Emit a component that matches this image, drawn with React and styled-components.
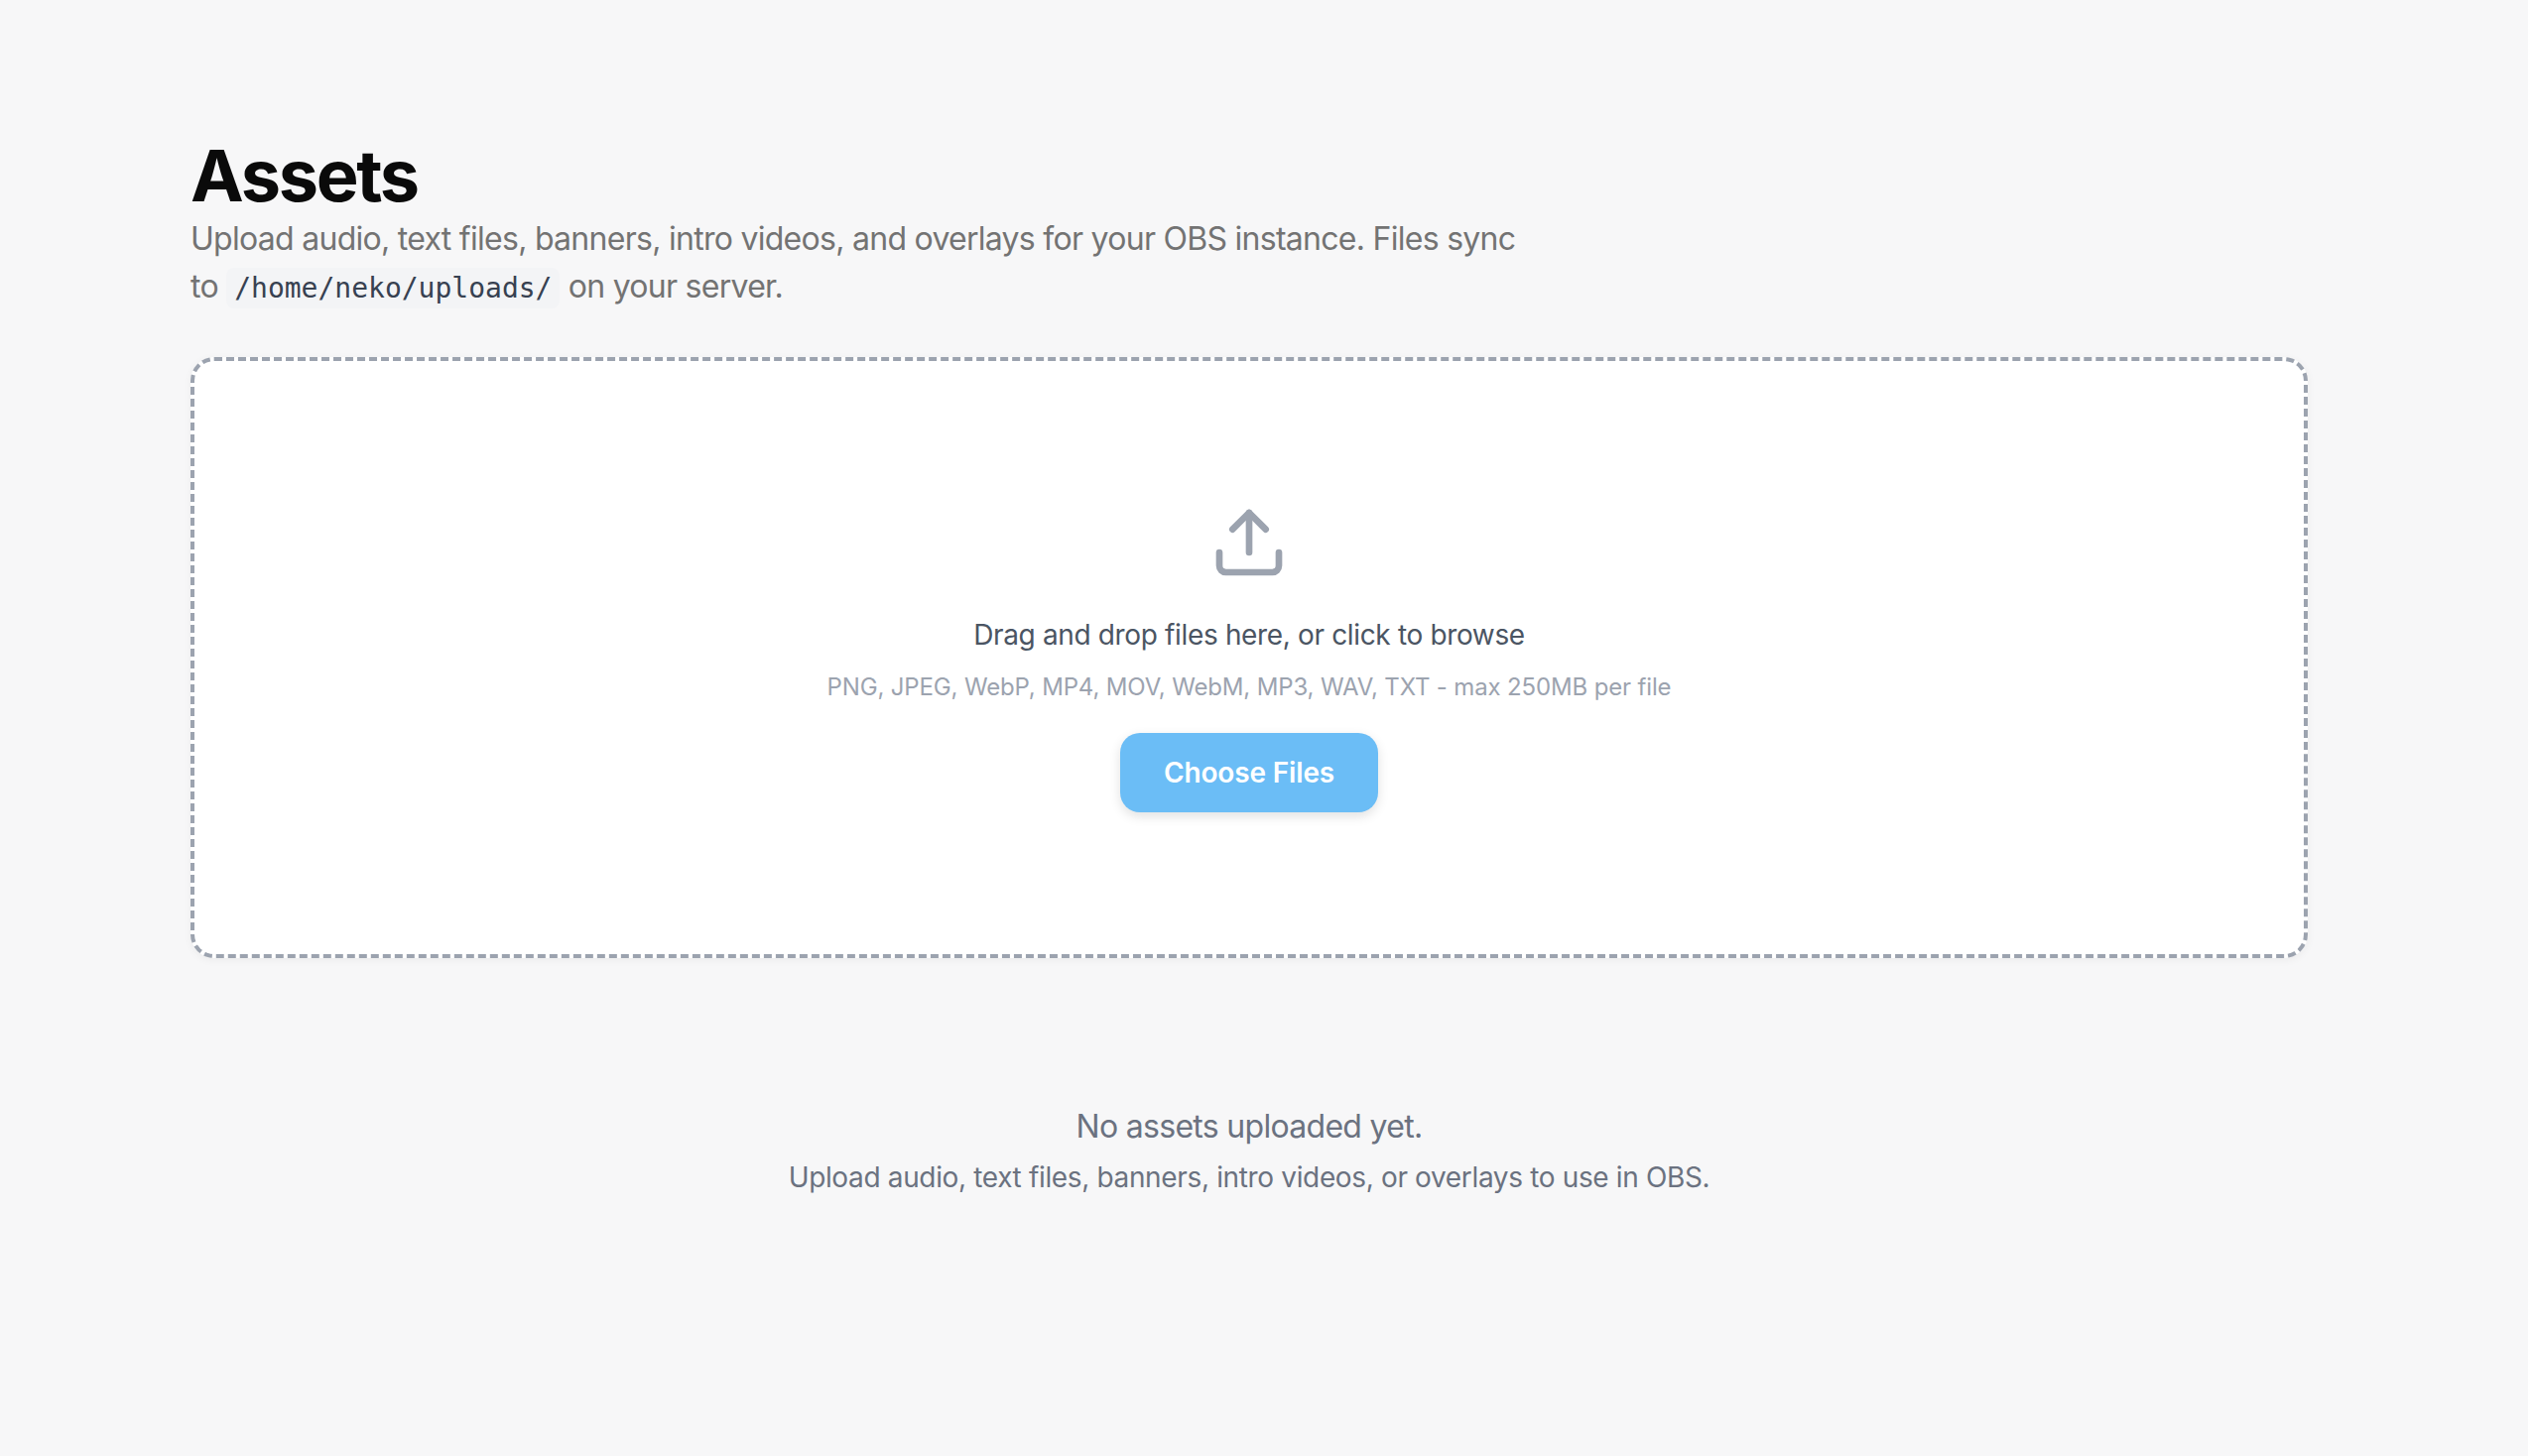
import React from "react";
import styled, { createGlobalStyle } from "styled-components";

const Global = createGlobalStyle`
  html, body { margin: 0; padding: 0; background: #f7f7f8; }
  body { font-family: Inter, "Liberation Sans", sans-serif; min-height: 1468px; }
`;
const Page = styled.main`
  box-sizing: border-box;
  width: 2134px;
  margin-left: 192px;
  padding-top: 137px;
`;
const Title = styled.h1`
  margin: 0;
  font-size: 72px;
  line-height: 80px;
  font-weight: 700;
  letter-spacing: -2.3px;
  color: #0a0a0a;
`;
const Lead = styled.p`
  margin: 0 0 47px;
  width: 1344px;
  font-size: 32px;
  line-height: 48px;
  letter-spacing: -0.72px;
  color: #737373;
`;
const Code = styled.code`
  padding: 4px 8px;
  border-radius: 8px;
  background: #f3f4f6;
  color: #374151;
  font-family: "DejaVu Sans Mono", monospace;
  font-size: 28px;
  line-height: 1;
  letter-spacing: 0;
`;
const Drop = styled.section`
  box-sizing: border-box;
  height: 606px;
  background: #fff;
  border: 4px dashed #9ca3af;
  border-radius: 24px;
  box-shadow: 0 2px 8px rgba(0, 0, 0, 0.05);
  display: flex;
  flex-direction: column;
  align-items: center;
  padding-top: 143px;
`;
const DropText = styled.p`
  margin: 32px 0 0;
  font-size: 28px;
  line-height: 42px;
  letter-spacing: -0.35px;
  color: #4b5563;
`;
const DropHint = styled.p`
  margin: 14px 0 0;
  font-size: 24px;
  line-height: 36px;
  letter-spacing: -0.15px;
  color: #9ca3af;
`;
const Button = styled.button`
  margin-top: 28px;
  width: 260px;
  height: 80px;
  border: 0;
  border-radius: 20px;
  background: #6bbdf6;
  color: #fff;
  font: 600 28px/40px Inter, sans-serif;
  letter-spacing: -0.15px;
  box-shadow: 0 4px 12px rgba(0,0,0,0.12);
`;
const Empty = styled.div`
  margin-top: 146px;
  display: flex;
  flex-direction: column;
  align-items: center;
`;
const EmptyTitle = styled.p`
  margin: 0;
  font-size: 32px;
  line-height: 48px;
  letter-spacing: -0.7px;
  color: #6b7280;
`;
const EmptyText = styled.p`
  margin: 6px 0 0;
  font-size: 28px;
  line-height: 42px;
  letter-spacing: -0.35px;
  color: #6b7280;
`;

export default function App() {
  return (
    <>
      <Global />
      <Page>
        <Title>Assets</Title>
        <Lead>
          Upload audio, text files, banners, intro videos, and overlays for your OBS instance. Files sync to <Code>/home/neko/uploads/</Code> on your server.
        </Lead>
        <Drop>
          <svg width="80" height="80" viewBox="0 0 24 24" fill="none" stroke="#9ca3af" strokeWidth="2" strokeLinecap="round" strokeLinejoin="round">
            <path d="M21 15v4a2 2 0 0 1-2 2H5a2 2 0 0 1-2-2v-4" />
            <path d="M17 8l-5-5-5 5" />
            <path d="M12 3v12" />
          </svg>
          <DropText>Drag and drop files here, or click to browse</DropText>
          <DropHint>PNG, JPEG, WebP, MP4, MOV, WebM, MP3, WAV, TXT - max 250MB per file</DropHint>
          <Button>Choose Files</Button>
        </Drop>
        <Empty>
          <EmptyTitle>No assets uploaded yet.</EmptyTitle>
          <EmptyText>Upload audio, text files, banners, intro videos, or overlays to use in OBS.</EmptyText>
        </Empty>
      </Page>
    </>
  );
}
